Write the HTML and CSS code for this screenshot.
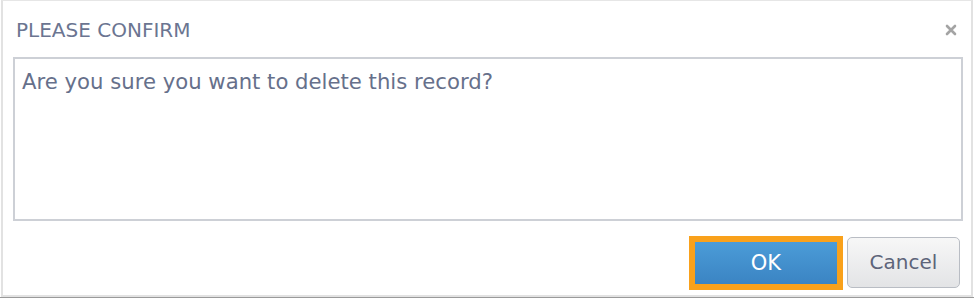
FILE: index.html
```html
<!DOCTYPE html>
<html lang="en">
<head>
    <meta charset="UTF-8">
    <title>Please Confirm</title>
    <link rel="stylesheet" href="styles.css">
</head>
<body>

    <div class="page">
        <div class="dialog">
            <div class="dialogHeader">
                <span class="dialogTitle">PLEASE CONFIRM</span>
                <span class="closeBtn">
                    <svg width="12" height="12" viewBox="0 0 12 12">
                        <path d="M2 2 L10 10 M10 2 L2 10" stroke="#a4a4a4" stroke-width="2.6" stroke-linecap="round"/>
                    </svg>
                </span>
            </div>

            <!-- message area -->
            <div class="dialogBody">
                Are you sure you want to delete this record?
            </div>

            <div class="dialogFooter">
                <button class="okBtn">OK</button>
                <button class="cancelBtn">Cancel</button>
            </div>
        </div>
    </div>

</body>
</html>
```

FILE: styles.css
```css
body{
    margin: 0;
    padding: 0;
    background: #fff;
    font-family: "DejaVu Sans", Verdana, sans-serif;
}

.page{
    width: 974px;
    height: 297px;
    border-bottom: 1px solid #9a9a9a;
}

.dialog{
    margin-left: 1px;
    width: 972px;
    height: 297px;
    box-sizing: border-box;
    border: 2px solid #e2e2e2;
    border-top: 1px solid #e6e6e6;
    display: flex;
    flex-direction: column;
}

.dialogHeader{
    height: 56px;
    display: flex;
    align-items: center;
    justify-content: space-between;
    padding: 0 14px 0 13px;
}

.dialogTitle{
    color: #6b7591;
    font-size: 20px;
    margin-top: 2px;
}

.closeBtn{
    display: flex;
    margin-top: 2px;
}

.dialogBody{
    margin: 0 8px 0 10px;
    height: 164px;
    box-sizing: border-box;
    border: 2px solid #cdd0d6;
    padding: 10px 7px;
    color: #66708b;
    font-size: 21.2px;
}

.dialogFooter{
    flex: 1;
    display: flex;
    justify-content: flex-end;
    align-items: center;
    gap: 4px;
    padding: 8px 11px 0 0;
}

.okBtn{
    width: 154px;
    height: 54px;
    box-sizing: border-box;
    border: 6px solid #f9a11b;
    background: linear-gradient(#4b9cd8, #3b84c3);
    color: #fff;
    font-family: "DejaVu Sans", Verdana, sans-serif;
    font-size: 21px;
    padding: 0;
    margin-top: 1px;
}

.cancelBtn{
    width: 113px;
    height: 51px;
    box-sizing: border-box;
    border: 1px solid #b9bdc4;
    border-radius: 5px;
    background: linear-gradient(#f7f7f7, #e3e4e6);
    color: #5d6479;
    font-family: "DejaVu Sans", Verdana, sans-serif;
    font-size: 20px;
    padding: 0;
}
```
